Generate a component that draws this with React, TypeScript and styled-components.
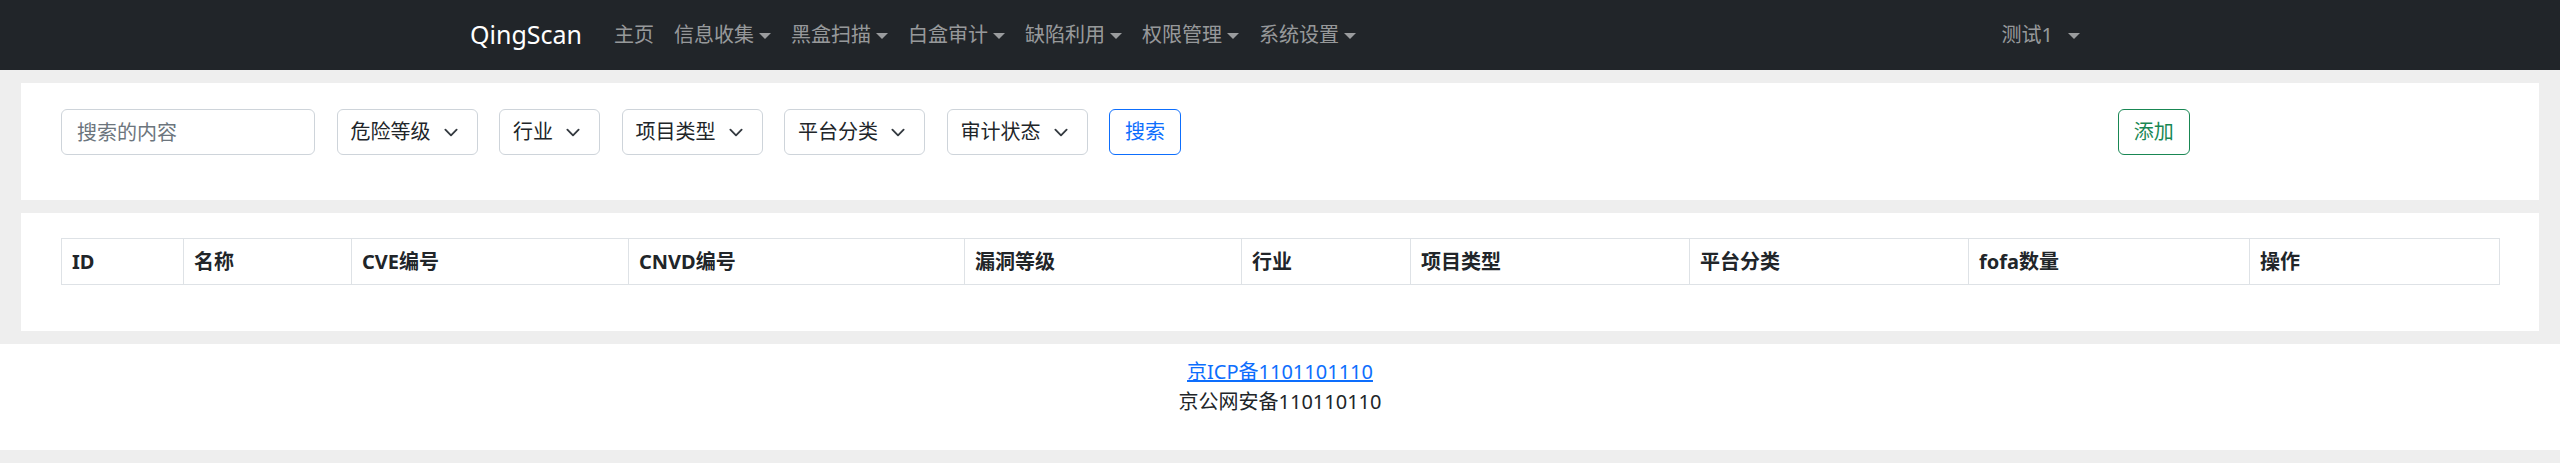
import React from "react";
import styled, { createGlobalStyle } from "styled-components";

const GlobalStyle = createGlobalStyle`
  html, body {
    margin: 0;
    padding: 0;
    background: #eeeeee;
  }
  body {
    font-family: "Noto Sans", "Noto Sans CJK SC", sans-serif;
    font-size: 20px;
    line-height: 1.5;
    color: #212529;
  }
  * { box-sizing: border-box; }
`;

const Navbar = styled.nav`
  height: 70px;
  background: #212529;
  display: flex;
  justify-content: center;
`;

const NavContainer = styled.div`
  width: 1650px;
  padding: 0 15px;
  display: flex;
  align-items: center;
`;

const Brand = styled.a`
  font-size: 25px;
  color: #ffffff;
  margin-right: 22px;
  text-decoration: none;
  line-height: 1.5;
`;

const NavList = styled.div`
  display: flex;
  align-items: center;
`;

const NavLink = styled.a<{ $drop?: boolean }>`
  color: rgba(255, 255, 255, 0.55);
  padding: 0 10px;
  font-size: 20px;
  text-decoration: none;
  display: inline-flex;
  align-items: center;
  white-space: nowrap;
  &::after {
    content: "";
    display: ${(p) => (p.$drop ? "inline-block" : "none")};
    margin-left: 5px;
    border-top: 6px solid rgba(255, 255, 255, 0.55);
    border-left: 6px solid transparent;
    border-right: 6px solid transparent;
    transform: translateY(1px);
  }
`;

const UserLink = styled(NavLink)`
  &::after {
    margin-left: 15px;
  }
`;

const RightNav = styled(NavList)`
  margin-left: auto;
`;

const Main = styled.main`
  padding: 13px 21px 0;
  display: flex;
  flex-direction: column;
  gap: 13px;
`;

const Card = styled.section<{ $top: number; $bottom: number }>`
  background: #ffffff;
  padding: ${(p) => `${p.$top}px 40px ${p.$bottom}px`};
`;

const FormRow = styled.div`
  display: grid;
  grid-template-columns: calc((100% + 30px) * 10 / 12 - 30px) 1fr;
  column-gap: 30px;
  align-items: center;
`;

const Filters = styled.div`
  display: flex;
  gap: 21.5px;
  align-items: center;
`;

const TextInput = styled.input`
  width: 254px;
  height: 46px;
  border: 1px solid #ced4da;
  border-radius: 6px;
  padding: 0 15px;
  font-family: inherit;
  font-size: 20px;
  color: #212529;
  outline: none;
  &::placeholder {
    color: #6c757d;
  }
`;

const SelectBox = styled.div`
  height: 46px;
  border: 1px solid #ced4da;
  border-radius: 6px;
  padding: 0 16px 0 13px;
  display: inline-flex;
  align-items: center;
  white-space: nowrap;
  color: #212529;
  background: #ffffff;
`;

const Chevron = styled.svg`
  width: 20px;
  height: 15px;
  margin-left: 10px;
  flex: none;
`;

const OutlineButton = styled.button<{ $color: string }>`
  height: 46px;
  padding: 0 15px;
  border: 1px solid ${(p) => p.$color};
  color: ${(p) => p.$color};
  background: transparent;
  border-radius: 6px;
  font-family: inherit;
  font-size: 20px;
  line-height: 1.5;
  white-space: nowrap;
`;

const Table = styled.table`
  width: 100%;
  table-layout: fixed;
  border-collapse: collapse;
`;

const Th = styled.th<{ $w: number }>`
  width: ${(p) => p.$w}px;
  height: 46px;
  padding: 0 10px;
  border: 1px solid #dee2e6;
  text-align: left;
  font-weight: 700;
  font-size: 20px;
  color: #212529;
  white-space: nowrap;
`;

const Footer = styled.footer`
  margin-top: 13px;
  background: #ffffff;
  padding: 13px 0;
  text-align: center;
  font-size: 20px;
  line-height: 30px;
`;

const FooterLink = styled.a`
  color: #0d6efd;
  text-decoration: underline;
`;

const FooterText = styled.p`
  margin: 0 0 20px;
`;

const Select = ({ label }: { label: string }) => (
  <SelectBox>
    <span>{label}</span>
    <Chevron viewBox="0 0 16 16">
      <path
        fill="none"
        stroke="#343a40"
        strokeLinecap="round"
        strokeLinejoin="round"
        strokeWidth="2"
        d="m2 5 6 6 6-6"
      />
    </Chevron>
  </SelectBox>
);

const navItems: { label: string; drop: boolean }[] = [
  { label: "主页", drop: false },
  { label: "信息收集", drop: true },
  { label: "黑盒扫描", drop: true },
  { label: "白盒审计", drop: true },
  { label: "缺陷利用", drop: true },
  { label: "权限管理", drop: true },
  { label: "系统设置", drop: true },
];

const columns: { label: string; w: number }[] = [
  { label: "ID", w: 122 },
  { label: "名称", w: 168 },
  { label: "CVE编号", w: 277 },
  { label: "CNVD编号", w: 336 },
  { label: "漏洞等级", w: 277 },
  { label: "行业", w: 169 },
  { label: "项目类型", w: 279 },
  { label: "平台分类", w: 279 },
  { label: "fofa数量", w: 281 },
  { label: "操作", w: 250 },
];

export default function App() {
  return (
    <>
      <GlobalStyle />
      <Navbar>
        <NavContainer>
          <Brand href="#">QingScan</Brand>
          <NavList>
            {navItems.map((n) => (
              <NavLink key={n.label} href="#" $drop={n.drop}>
                {n.label}
              </NavLink>
            ))}
          </NavList>
          <RightNav>
            <UserLink href="#" $drop>
              测试1
            </UserLink>
          </RightNav>
        </NavContainer>
      </Navbar>
      <Main>
        <Card $top={26} $bottom={45}>
          <FormRow>
            <Filters>
              <TextInput placeholder="搜索的内容" />
              <Select label="危险等级" />
              <Select label="行业" />
              <Select label="项目类型" />
              <Select label="平台分类" />
              <Select label="审计状态" />
              <OutlineButton $color="#0d6efd">搜索</OutlineButton>
            </Filters>
            <div>
              <OutlineButton $color="#198754">添加</OutlineButton>
            </div>
          </FormRow>
        </Card>
        <Card $top={25} $bottom={46}>
          <Table>
            <thead>
              <tr>
                {columns.map((c) => (
                  <Th key={c.label} $w={c.w}>
                    {c.label}
                  </Th>
                ))}
              </tr>
            </thead>
          </Table>
        </Card>
      </Main>
      <Footer>
        <div>
          <FooterLink href="#">京ICP备1101101110</FooterLink>
        </div>
        <FooterText>京公网安备110110110</FooterText>
      </Footer>
    </>
  );
}
